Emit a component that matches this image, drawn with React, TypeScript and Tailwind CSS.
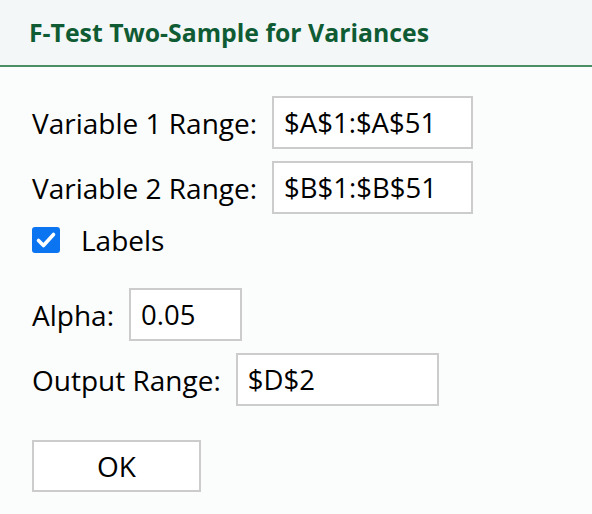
import { useState } from "react";

const font = { fontFamily: '"Open Sans", "Noto Sans", sans-serif' };

function RangeRow({ label, value, width }: { label: string; value: string; width: string }) {
  return (
    <div className="flex items-center gap-[15px]">
      <span className="whitespace-nowrap text-[28px] text-black">{label}</span>
      <input
        defaultValue={value}
        className={`${width} h-[53px] border-2 border-[#cccccc] bg-white px-[10px] text-[27.5px] text-black outline-none`}
      />
    </div>
  );
}

export default function App() {
  const [labels, setLabels] = useState(true);

  return (
    <div className="h-[514px] w-[592px] bg-[#fbfdfd]" style={font}>
      {/* Header */}
      <div className="flex h-[67px] items-center border-b-2 border-[#4a8f63] bg-[#f3f7f8] pl-[29px]">
        <h1 className="text-[24.8px] font-bold text-[#0f5c34]">F-Test Two-Sample for Variances</h1>
      </div>

      {/* Form */}
      <div className="flex flex-col px-[32px] pt-[29px]">
        <div className="flex flex-col gap-[12px]">
          <RangeRow label="Variable 1 Range:" value="$A$1:$A$51" width="w-[201px]" />
          <RangeRow label="Variable 2 Range:" value="$B$1:$B$51" width="w-[201px]" />
        </div>

        <label className="mt-[13px] flex h-[26px] items-center gap-[21px]">
          <span
            onClick={() => setLabels(!labels)}
            className="flex h-[26px] w-[28px] items-center justify-center rounded-[3px] bg-[#0b74f0]"
          >
            {labels && (
              <svg viewBox="0 0 24 24" className="h-[24px] w-[24px]" fill="none" stroke="white" strokeWidth="3.6" strokeLinecap="round" strokeLinejoin="round">
                <path d="M4.5 12.5l5 5L19.5 6.5" />
              </svg>
            )}
          </span>
          <span className="text-[28px] text-black">Labels</span>
        </label>

        <div className="mt-[35px] flex flex-col gap-[12px]">
          <RangeRow label="Alpha:" value="0.05" width="w-[113px]" />
          <RangeRow label="Output Range:" value="$D$2" width="w-[203px]" />
        </div>

        <button className="mt-[34px] h-[52px] w-[169px] border-2 border-[#cccccc] bg-white text-[28px] text-black">
          OK
        </button>
      </div>
    </div>
  );
}
